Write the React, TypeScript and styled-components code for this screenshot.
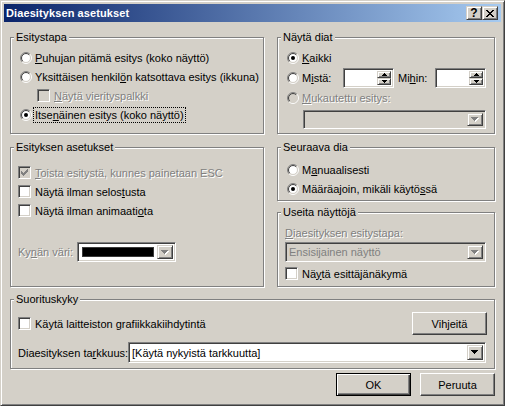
import React from 'react'
import styled, { createGlobalStyle, css } from 'styled-components'

const FACE = '#d4d0c8'
const SHADOW = '#808080'
const DARK = '#404040'

const GlobalStyle = createGlobalStyle`
  html, body {
    margin: 0;
    padding: 0;
  }
  body {
    font-family: "Liberation Sans", Arial, sans-serif;
    font-size: 11px;
    background: ${FACE};
  }
`

const sunken = css`
  border: 1px solid;
  border-color: ${SHADOW} #fff #fff ${SHADOW};
  box-shadow: inset 1px 1px 0 ${DARK}, inset -1px -1px 0 ${FACE};
`

const raised = css`
  border: 1px solid;
  border-color: ${FACE} ${DARK} ${DARK} ${FACE};
  box-shadow: inset 1px 1px 0 #fff, inset -1px -1px 0 ${SHADOW};
`

const Window = styled.div`
  width: 505px;
  height: 406px;
  box-sizing: border-box;
  display: flex;
  flex-direction: column;
  padding: 3px;
  background: ${FACE};
  color: #000;
  border: 1px solid;
  border-color: ${FACE} ${DARK} ${DARK} ${FACE};
  box-shadow: inset 1px 1px 0 #fff, inset -1px -1px 0 ${SHADOW};
`

const TitleBar = styled.div`
  height: 18px;
  flex-shrink: 0;
  display: flex;
  align-items: center;
  padding: 0 3px 0 2px;
  background: linear-gradient(to right, #0a246a, #a6caf0);
`

const Title = styled.span`
  flex: 1;
  color: #fff;
  font-weight: bold;
  font-size: 11px;
  letter-spacing: 0.1px;
`

const TitleButton = styled.span`
  box-sizing: border-box;
  width: 16px;
  height: 14px;
  display: flex;
  align-items: center;
  justify-content: center;
  background: ${FACE};
  font-weight: bold;
  font-size: 12px;
  line-height: 1;
  ${raised}
`

const Body = styled.div`
  flex: 1;
  display: flex;
  flex-direction: column;
  padding: 15px 6px 0;
`

const Columns = styled.div`
  display: grid;
  grid-template-columns: 254px 218px;
  column-gap: 13px;
  row-gap: 13px;
`

const Stack = styled.div`
  display: flex;
  flex-direction: column;
  gap: 11px;
`

const Group = styled.div<{ $h: number; $pad: string }>`
  position: relative;
  box-sizing: border-box;
  height: ${p => p.$h}px;
  padding: ${p => p.$pad};
  display: flex;
  flex-direction: column;
  border: 1px solid ${SHADOW};
  box-shadow: inset 1px 1px 0 #fff, 1px 1px 0 #fff;
`

const Legend = styled.span`
  position: absolute;
  top: -8px;
  left: 3px;
  padding: 0 2px;
  line-height: 14px;
  background: ${FACE};
`

const Row = styled.div<{ $h?: number; $mt?: number; $ml?: number; $gap?: number }>`
  display: flex;
  align-items: center;
  flex-shrink: 0;
  height: ${p => p.$h ?? 19}px;
  margin-top: ${p => p.$mt ?? 0}px;
  margin-left: ${p => p.$ml ?? 0}px;
  gap: ${p => p.$gap ?? 4}px;
  white-space: nowrap;
`

const Text = styled.span<{ $disabled?: boolean; $w?: number; $ml?: number }>`
  flex-shrink: 0;
  ${p => p.$w && `width: ${p.$w}px;`}
  ${p => p.$ml && `margin-left: ${p.$ml}px;`}
  color: ${p => (p.$disabled ? SHADOW : '#000')};
  text-shadow: ${p => (p.$disabled ? '1px 1px 0 #fff' : 'none')};
  u {
    text-decoration-thickness: 1px;
    text-underline-offset: 1px;
  }
`

const Focus = styled.span`
  outline: 1px dotted #000;
  outline-offset: 1px;
`

const CheckBox = styled.span<{ $disabled?: boolean }>`
  box-sizing: border-box;
  width: 13px;
  height: 13px;
  flex-shrink: 0;
  display: flex;
  align-items: center;
  justify-content: center;
  background: ${p => (p.$disabled ? FACE : '#fff')};
  ${sunken}
`

const Field = styled.div<{ $w: number }>`
  box-sizing: border-box;
  width: ${p => p.$w}px;
  height: 20px;
  flex-shrink: 0;
  display: flex;
  justify-content: flex-end;
  padding: 2px;
  background: #fff;
  ${sunken}
`

const Spin = styled.div`
  width: 14px;
  display: flex;
  flex-direction: column;
`

const SpinHalf = styled.span`
  box-sizing: border-box;
  flex: 1;
  display: flex;
  align-items: center;
  justify-content: center;
  background: ${FACE};
  ${raised}
`

const Combo = styled.div<{ $w?: number; $h?: number; $disabled?: boolean }>`
  box-sizing: border-box;
  ${p => (p.$w ? `width: ${p.$w}px;` : 'flex: 1;')}
  height: ${p => p.$h ?? 20}px;
  flex-shrink: 0;
  display: flex;
  padding: 2px;
  background: ${p => (p.$disabled ? FACE : '#fff')};
  ${sunken}
`

const ComboText = styled.span<{ $disabled?: boolean }>`
  flex: 1;
  display: flex;
  align-items: center;
  padding-left: 1px;
  overflow: hidden;
  color: ${p => (p.$disabled ? SHADOW : '#000')};
`

const Swatch = styled.span`
  flex: 1;
  margin: 2px 3px 2px 2px;
  background: #000;
  border: 1px solid #3a3a3a;
`

const DropButton = styled.span`
  box-sizing: border-box;
  width: 16px;
  display: flex;
  align-items: center;
  justify-content: center;
  background: ${FACE};
  ${raised}
`

const PushButton = styled.button<{ $default?: boolean }>`
  box-sizing: border-box;
  width: 75px;
  height: 23px;
  margin: 0;
  padding: 0;
  font: inherit;
  color: #000;
  background: ${FACE};
  border: 1px solid;
  border-color: #fff ${DARK} ${DARK} #fff;
  box-shadow: inset -1px -1px 0 ${SHADOW};
  ${p =>
    p.$default &&
    css`
      border-color: #000;
      box-shadow: inset 1px 1px 0 #fff, inset -1px -1px 0 ${DARK}, inset -2px -2px 0 ${SHADOW};
    `}
`

const Spacer = styled.span`
  flex: 1;
`

const Footer = styled.div`
  display: flex;
  justify-content: flex-end;
  gap: 9px;
  margin-top: 4px;
`

function Radio({ checked, disabled }: { checked?: boolean; disabled?: boolean }) {
  const c = 6
  const arc = (r: number, a: string, b: string) => {
    const d = r * 0.7071
    return (
      <>
        <path d={`M${c - d} ${c + d} A${r} ${r} 0 0 1 ${c + d} ${c - d}`} stroke={a} fill="none" />
        <path d={`M${c + d} ${c - d} A${r} ${r} 0 0 1 ${c - d} ${c + d}`} stroke={b} fill="none" />
      </>
    )
  }
  return (
    <svg width="12" height="12" viewBox="0 0 12 12" style={{ flexShrink: 0 }}>
      <circle cx={c} cy={c} r={4.5} fill={disabled ? FACE : '#fff'} />
      {arc(5.5, SHADOW, '#fff')}
      {arc(4.5, DARK, FACE)}
      {checked && <circle cx={c} cy={c} r={2} fill={disabled ? SHADOW : '#000'} />}
    </svg>
  )
}

function Check({ checked, disabled }: { checked?: boolean; disabled?: boolean }) {
  return (
    <CheckBox $disabled={disabled}>
      {checked && (
        <svg width="7" height="7" viewBox="0 0 7 7" shapeRendering="crispEdges">
          <path
            d="M6 0h1v3h-1v1h-1v1h-1v1h-1v1h-1v-1h-1v-1h-1v-3h1v1h1v1h1v-1h1v-1h1z"
            fill={disabled ? SHADOW : '#000'}
          />
        </svg>
      )}
    </CheckBox>
  )
}

function Arrow({ disabled }: { disabled?: boolean }) {
  const d = 'M0 0h7v1h-1v1h-1v1h-1v1h-1v-1h-1v-1h-1v-1h-1z'
  return (
    <svg width="8" height="5" viewBox="0 0 8 5" shapeRendering="crispEdges">
      {disabled && <path d={d} fill="#fff" transform="translate(1 1)" />}
      <path d={d} fill={disabled ? SHADOW : '#000'} />
    </svg>
  )
}

function SmallArrow({ up }: { up?: boolean }) {
  return (
    <svg width="5" height="3" viewBox="0 0 5 3" shapeRendering="crispEdges">
      <path d={up ? 'M2 0h1v1h1v1h1v1h-5v-1h1v-1h1z' : 'M0 0h5v1h-1v1h-1v1h-1v-1h-1v-1h-1z'} fill="#000" />
    </svg>
  )
}

function SpinField() {
  return (
    <Field $w={51}>
      <Spin>
        <SpinHalf>
          <SmallArrow up />
        </SpinHalf>
        <SpinHalf>
          <SmallArrow />
        </SpinHalf>
      </Spin>
    </Field>
  )
}

function CloseGlyph() {
  return (
    <svg width="8" height="7" viewBox="0 0 8 7" shapeRendering="crispEdges">
      <path
        d="M0 0h2v1h-2zM6 0h2v1h-2zM1 1h2v1h-2zM5 1h2v1h-2zM2 2h4v1h-4zM3 3h2v1h-2zM2 4h4v1h-4zM1 5h2v1h-2zM5 5h2v1h-2zM0 6h2v1h-2zM6 6h2v1h-2z"
        fill="#000"
      />
    </svg>
  )
}

export default function App() {
  return (
    <>
      <GlobalStyle />
      <Window>
        <TitleBar>
          <Title>Diaesityksen asetukset</Title>
          <TitleButton>?</TitleButton>
          <TitleButton>
            <CloseGlyph />
          </TitleButton>
        </TitleBar>

        <Body>
          <Columns>
            <Group $h={97} $pad="10px 0 0 9px">
              <Legend>Esitystapa</Legend>
              <Row $gap={3}>
                <Radio />
                <Text>
                  <u>P</u>uhujan pitämä esitys (koko näyttö)
                </Text>
              </Row>
              <Row $gap={3}>
                <Radio />
                <Text>
                  Yksittäisen henkil<u>ö</u>n katsottava esitys (ikkuna)
                </Text>
              </Row>
              <Row $ml={17}>
                <Check disabled />
                <Text $disabled>
                  <u>N</u>äytä vierityspalkki
                </Text>
              </Row>
              <Row $gap={3}>
                <Radio checked />
                <Text>
                  <Focus>
                    Itse<u>n</u>äinen esitys (koko näyttö)
                  </Focus>
                </Text>
              </Row>
            </Group>

            <Group $h={97} $pad="10px 0 0 9px">
              <Legend>Näytä diat</Legend>
              <Row $gap={3}>
                <Radio checked />
                <Text>
                  <u>K</u>aikki
                </Text>
              </Row>
              <Row $gap={3} $h={21}>
                <Radio />
                <Text $w={38}>
                  M<u>i</u>stä:
                </Text>
                <SpinField />
                <Text $w={34} $ml={1}>
                  Mi<u>h</u>in:
                </Text>
                <SpinField />
              </Row>
              <Row $gap={3}>
                <Radio disabled />
                <Text $disabled>
                  <u>M</u>ukautettu esitys:
                </Text>
              </Row>
              <Row $h={19} $mt={3} $ml={16}>
                <Combo $w={183} $h={19} $disabled>
                  <ComboText $disabled />
                  <DropButton>
                    <Arrow disabled />
                  </DropButton>
                </Combo>
              </Row>
            </Group>

            <Group $h={140} $pad="15px 0 0 7px">
              <Legend>Esityksen asetukset</Legend>
              <Row>
                <Check checked disabled />
                <Text $disabled>
                  <u>T</u>oista esitystä, kunnes painetaan ESC
                </Text>
              </Row>
              <Row>
                <Check />
                <Text>
                  Näytä ilman selos<u>t</u>usta
                </Text>
              </Row>
              <Row>
                <Check />
                <Text>
                  Näytä ilman animaati<u>o</u>ta
                </Text>
              </Row>
              <Row $h={20} $mt={22} $gap={0}>
                <Text $disabled $w={59}>
                  Ky<u>n</u>än väri:
                </Text>
                <Combo $w={99}>
                  <Swatch />
                  <DropButton>
                    <Arrow disabled />
                  </DropButton>
                </Combo>
              </Row>
            </Group>

            <Stack>
              <Group $h={54} $pad="12px 0 0 9px">
                <Legend>Seuraava dia</Legend>
                <Row $gap={3}>
                  <Radio />
                  <Text>
                    M<u>a</u>nuaalisesti
                  </Text>
                </Row>
                <Row $gap={3}>
                  <Radio checked />
                  <Text>
                    Määräajoin, mikäli käytö<u>s</u>sä
                  </Text>
                </Row>
              </Group>

              <Group $h={75} $pad="12px 0 0 7px">
                <Legend>Useita näyttöjä</Legend>
                <Row $h={16}>
                  <Text $disabled>
                    <u>D</u>iaesityksen esitystapa:
                  </Text>
                </Row>
                <Row $h={20} $mt={1}>
                  <Combo $w={201} $disabled>
                    <ComboText $disabled>Ensisijainen näyttö</ComboText>
                    <DropButton>
                      <Arrow disabled />
                    </DropButton>
                  </Combo>
                </Row>
                <Row $mt={2}>
                  <Check />
                  <Text>
                    Nä<u>y</u>tä esittäjänäkymä
                  </Text>
                </Row>
              </Group>
            </Stack>
          </Columns>

          <Group $h={70} $pad="12px 7px 0 7px" style={{ marginTop: 12 }}>
            <Legend>Suorituskyky</Legend>
            <Row $h={23}>
              <Check />
              <Text>
                Käytä laitteiston <u>g</u>rafiikkakiihdytintä
              </Text>
              <Spacer />
              <PushButton>
                Vih<u>j</u>eitä
              </PushButton>
            </Row>
            <Row $h={21} $mt={7} $gap={0} style={{ marginRight: 1 }}>
              <Text $w={110}>
                Diaesityksen ta<u>r</u>kkuus:
              </Text>
              <Combo $h={21}>
                <ComboText>[Käytä nykyistä tarkkuutta]</ComboText>
                <DropButton>
                  <Arrow />
                </DropButton>
              </Combo>
            </Row>
          </Group>

          <Footer>
            <PushButton $default>OK</PushButton>
            <PushButton>Peruuta</PushButton>
          </Footer>
        </Body>
      </Window>
    </>
  )
}
